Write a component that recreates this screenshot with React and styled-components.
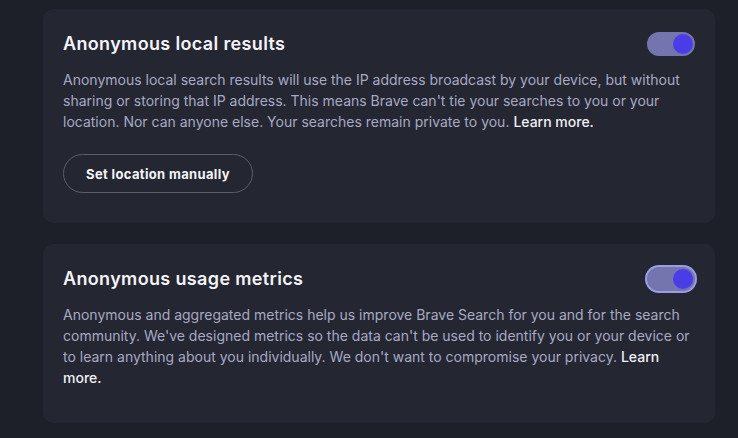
import styled, { createGlobalStyle } from "styled-components";

const GlobalStyle = createGlobalStyle`
    * {
        box-sizing: border-box;
    }

    body {
        margin: 0;
        background-color: #1e2029;
        font-family: Inter, "Noto Sans", sans-serif;
    }
`;

export default function App() {
    return (
        <Page>
            <GlobalStyle />
            <Card>
                <CardHeader>
                    <Title>Anonymous local results</Title>
                    <Toggle $focused={false}><Knob /></Toggle>
                </CardHeader>
                <Description>
                    Anonymous local search results will use the IP address broadcast by your device, but without
                    sharing or storing that IP address. This means Brave can't tie your searches to you or your
                    location. Nor can anyone else. Your searches remain private to you. <LearnMore href="#">Learn more.</LearnMore>
                </Description>
                <OutlineButton>Set location manually</OutlineButton>
            </Card>
            <Card $last>
                <CardHeader>
                    <Title>Anonymous usage metrics</Title>
                    <Toggle $focused={true}><Knob /></Toggle>
                </CardHeader>
                <Description>
                    Anonymous and aggregated metrics help us improve Brave Search for you and for the search
                    community. We've designed metrics so the data can't be used to identify you or your device or
                    to learn anything about you individually. We don't want to compromise your privacy. <LearnMore href="#">Learn more.</LearnMore>
                </Description>
            </Card>
        </Page>
    );
}

const Page = styled.main`
    width: 738px;
    height: 438px;
    overflow: hidden;
    padding: 9px 23px 0px 43px;
    display: flex;
    flex-direction: column;
    gap: 21px;
`;

const Card = styled.section`
    width: 672px;
    background-color: #242632;
    border-radius: 10px;
    padding: ${props => props.$last ? "20px 20px 35px" : "20px 20px 30px"};
    display: flex;
    flex-direction: column;
    align-items: flex-start;
`;

const CardHeader = styled.div`
    width: 100%;
    height: 30px;
    display: flex;
    justify-content: space-between;
    align-items: center;
    margin-bottom: 10px;
`;

const Title = styled.h2`
    margin: 0;
    font-size: 18px;
    line-height: 30px;
    font-weight: 600;
    color: #f4f4f8;
    letter-spacing: 0.35px;
`;

const Toggle = styled.div`
    width: 48px;
    height: 24px;
    border-radius: 12px;
    background-color: #7474ae;
    display: flex;
    align-items: center;
    justify-content: flex-end;
    padding: 2px;
    box-shadow: ${props => props.$focused ? "0 0 0 2px #9b9be6" : "none"};
`;

const Knob = styled.span`
    width: 20px;
    height: 20px;
    border-radius: 50%;
    background-color: #4a3de8;
`;

const Description = styled.p`
    margin: 0;
    font-size: 14px;
    line-height: 21px;
    color: #a7aac2;
`;

const LearnMore = styled.a`
    color: #f0f0f6;
    font-weight: 500;
    text-decoration: none;
`;

const OutlineButton = styled.button`
    margin-top: 22px;
    width: 190px;
    height: 39px;
    border-radius: 20px;
    border: 1px solid #5b5d6c;
    background: transparent;
    color: #f4f4f8;
    font-family: inherit;
    font-size: 13px;
    font-weight: 700;
    letter-spacing: 0.35px;
    cursor: pointer;
`;
